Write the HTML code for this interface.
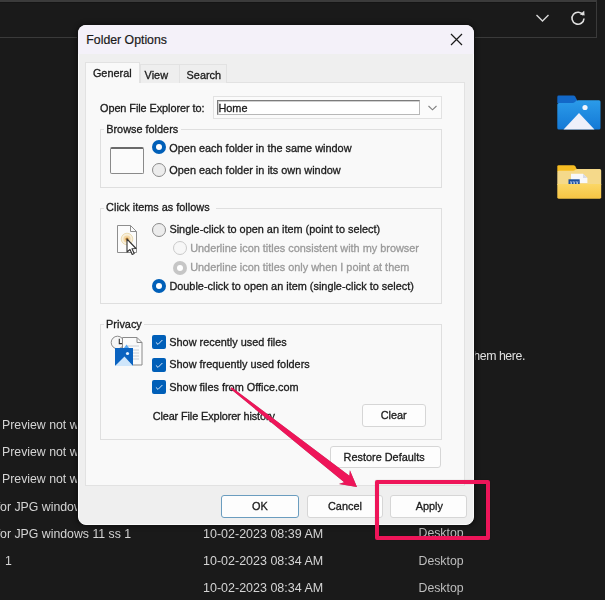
<!DOCTYPE html>
<html><head><meta charset="utf-8"><style>
html,body{margin:0;padding:0;}
body{width:605px;height:600px;overflow:hidden;position:relative;background:#1a1a1a;font-family:"Liberation Sans",sans-serif;}
.t{position:absolute;white-space:nowrap;line-height:1;}
.d{transform:scaleY(1.08);transform-origin:0 9.2px;-webkit-text-stroke:0.3px currentColor;}
#w{position:absolute;left:0;top:0;width:605px;height:600px;overflow:hidden;filter:blur(0.3px);}
</style></head><body>
<div id="w">
<div style="position:absolute;left:-2px;top:0px;width:599px;height:38px;box-sizing:border-box;border-top:2px solid #3b3b3b;border-right:1px solid #3a3a3a;border-bottom:1px solid #3a3a3a;background:#1a1a1a;"></div>
<div style="position:absolute;left:0px;top:2px;width:596px;height:1px;box-sizing:border-box;background:#151515;"></div>
<svg style="position:absolute;left:535px;top:13px" width="15" height="10" viewBox="0 0 15 10"><path d="M1.5 2 L7.5 8 L13.5 2" fill="none" stroke="#d8d8d8" stroke-width="1.4"/></svg>
<svg style="position:absolute;left:569px;top:9px" width="18" height="18" viewBox="0 0 18 18"><path d="M14.2 6.2 A6 6 0 1 0 15 9.5" fill="none" stroke="#e0e0e0" stroke-width="1.6"/><path d="M10.8 5.6 L15.6 6.4 L15.2 1.8 Z" fill="#e0e0e0"/></svg>
<div class="t" style="left:2.00px;top:419.39px;font-size:12.3px;color:#d4d4d4;">Preview not working</div>
<div class="t" style="left:2.00px;top:446.39px;font-size:12.3px;color:#d4d4d4;">Preview not working</div>
<div class="t" style="left:2.00px;top:473.39px;font-size:12.3px;color:#d4d4d4;">Preview not working</div>
<div class="t" style="left:-3.30px;top:500.59px;font-size:12.3px;color:#d4d4d4;">for JPG windows 11 ss 1</div>
<div class="t" style="left:-3.30px;top:527.59px;font-size:12.3px;color:#d4d4d4;">for JPG windows 11 ss 1</div>
<div class="t" style="left:5.00px;top:554.79px;font-size:12.3px;color:#d4d4d4;">1</div>
<div class="t" style="left:203.00px;top:528.02px;font-size:12.5px;color:#d4d4d4;">10-02-2023 08:39 AM</div>
<div class="t" style="left:203.00px;top:554.72px;font-size:12.5px;color:#d4d4d4;">10-02-2023 08:34 AM</div>
<div class="t" style="left:203.00px;top:581.82px;font-size:12.5px;color:#d4d4d4;">10-02-2023 08:34 AM</div>
<div class="t" style="left:418.50px;top:527.19px;font-size:12.3px;color:#bdbdbd;">Desktop</div>
<div class="t" style="left:418.50px;top:554.59px;font-size:12.3px;color:#bdbdbd;">Desktop</div>
<div class="t" style="left:418.50px;top:581.59px;font-size:12.3px;color:#bdbdbd;">Desktop</div>
<div class="t" style="left:470.30px;top:350.19px;font-size:12.3px;color:#e0e0e0;letter-spacing:-0.42px;">them here.</div>
<svg style="position:absolute;left:550px;top:90px" width="55" height="45" viewBox="0 0 55 45">
<defs><linearGradient id="gb" x1="0" y1="0" x2="0" y2="1"><stop offset="0" stop-color="#2b9be9"/><stop offset="1" stop-color="#1479d6"/></linearGradient></defs>
<path d="M7.3 7 Q7.3 5.6 8.7 5.6 L23.5 5.6 Q24.6 5.6 25.2 6.6 L27 10 L27 13 L7.3 13 Z" fill="#1268c8"/>
<path d="M7.3 14.5 Q7.3 12.9 8.9 12.9 L23 12.9 Q24.4 12.9 25.3 11.8 L26.2 10.8 Q27 10.3 28 10.3 L49 10.3 Q50.5 10.3 50.5 11.8 L50.5 38 Q50.5 39.5 49 39.5 L8.8 39.5 Q7.3 39.5 7.3 38 Z" fill="url(#gb)"/>
<circle cx="35" cy="17.5" r="2.6" fill="#f2f5fc"/>
<path d="M13.5 39.5 L29 23 L44.5 39.5 Z" fill="#eef0fa"/>
</svg>
<svg style="position:absolute;left:550px;top:160px" width="55" height="45" viewBox="0 0 55 45">
<defs><linearGradient id="gy" x1="0" y1="0" x2="0" y2="1"><stop offset="0" stop-color="#fbd766"/><stop offset="1" stop-color="#f7c443"/></linearGradient></defs>
<path d="M7.3 6.5 Q7.3 5.2 8.6 5.2 L23.5 5.2 Q24.6 5.2 25.2 6.2 L27 9.5 L27 12 L7.3 12 Z" fill="#f7bd22"/>
<path d="M7.3 12.5 Q7.3 10.8 9 10.8 L23 10.8 Q24.4 10.8 25.3 9.8 L26 9.2 Q26.6 9 27.5 9 L49.7 9 Q51.2 9 51.2 10.5 L51.2 25 L7.3 25 Z" fill="#f5d98a"/>
<path d="M21 13.8 L33 13.8 L37.4 18 L37.4 23 L21 23 Z" fill="#f8f8fb"/>
<path d="M33 13.8 L33 18 L37.4 18" fill="#d9dbe6"/>
<rect x="18.5" y="19.3" width="11.2" height="5.7" fill="#1b4f9f"/>
<path d="M20.5 21.3 L21.2 24 L22 21.3 M23.5 21.3 L24.2 24 L25 21.3 M26.5 21.3 L27.2 24 L28 21.3" stroke="#d8e2f3" stroke-width="0.7" fill="none"/>
<path d="M7.3 24 L51.2 24 L51.2 37.3 Q51.2 38.7 49.8 38.7 L8.7 38.7 Q7.3 38.7 7.3 37.3 Z" fill="url(#gy)"/>
</svg>
<div style="position:absolute;left:78px;top:25px;width:396px;height:500px;box-sizing:border-box;background:#efefef;border:1px solid #fafafa;border-radius:8px;box-shadow:0 0 0 1px #131313, 0 0 4px 2px rgba(0,0,0,.35);"></div>
<div style="position:absolute;left:78px;top:25px;width:396px;height:28.5px;box-sizing:border-box;background:#f4f1f9;border-radius:8px 8px 0 0;"></div>
<div class="t" style="left:86.30px;top:33.59px;font-size:12.3px;color:#1a1a1a;-webkit-text-stroke:0.2px #1a1a1a;">Folder Options</div>
<svg style="position:absolute;left:450px;top:33px" width="13" height="13" viewBox="0 0 13 13"><path d="M1 1 L12 12 M12 1 L1 12" stroke="#1a1a1a" stroke-width="1.2"/></svg>
<div style="position:absolute;left:85px;top:82px;width:380px;height:404px;box-sizing:border-box;background:#f9f9f9;border:1px solid #e2e2e2;"></div>
<div style="position:absolute;left:140px;top:64px;width:40px;height:19px;box-sizing:border-box;background:#eeeeee;border:1px solid #e2e2e2;border-bottom:none;"></div>
<div style="position:absolute;left:179px;top:64px;width:48px;height:19px;box-sizing:border-box;background:#eeeeee;border:1px solid #e2e2e2;border-bottom:none;"></div>
<div style="position:absolute;left:85px;top:62px;width:55px;height:21px;box-sizing:border-box;background:#f9f9f9;border:1px solid #e2e2e2;border-bottom:none;"></div>
<div class="t d" style="left:92.90px;top:67.77px;font-size:10.9px;color:#1b1b1b;">General</div>
<div class="t d" style="left:144.60px;top:70.17px;font-size:10.9px;color:#1b1b1b;">View</div>
<div class="t d" style="left:186.60px;top:70.17px;font-size:10.9px;color:#1b1b1b;">Search</div>
<div class="t d" style="left:100.00px;top:103.37px;font-size:10.9px;color:#1b1b1b;letter-spacing:-0.07px;">Open File Explorer to:</div>
<div style="position:absolute;left:213px;top:96px;width:229px;height:23px;box-sizing:border-box;background:#fbfbfb;border:1px solid #e2e2e2;"></div>
<div style="position:absolute;left:217px;top:100px;width:203px;height:15px;box-sizing:border-box;background:#ffffff;border:1px solid #b8b8b8;border-top-color:#7c7c7c;border-left-color:#7c7c7c;box-shadow:inset 1px 1px 0 #d0d0d0;"></div>
<div class="t d" style="left:218.40px;top:102.57px;font-size:10.9px;color:#1b1b1b;">Home</div>
<svg style="position:absolute;left:427px;top:104px" width="11" height="8" viewBox="0 0 11 8"><path d="M1.5 2 L5.5 5.8 L9.5 2" fill="none" stroke="#808080" stroke-width="1.1"/></svg>
<div style="position:absolute;left:100px;top:129px;width:342px;height:59px;box-sizing:border-box;border:1px solid #dfdfdf;"></div>
<div style="position:absolute;left:104.2px;top:127px;width:77px;height:5px;box-sizing:border-box;background:#f9f9f9;"></div>
<div class="t d" style="left:106.20px;top:124.17px;font-size:10.9px;color:#1b1b1b;">Browse folders</div>
<div style="position:absolute;left:100px;top:208px;width:342px;height:96px;box-sizing:border-box;border:1px solid #dfdfdf;"></div>
<div style="position:absolute;left:104.1px;top:206px;width:112px;height:5px;box-sizing:border-box;background:#f9f9f9;"></div>
<div class="t d" style="left:106.10px;top:202.47px;font-size:10.9px;color:#1b1b1b;">Click items as follows</div>
<div style="position:absolute;left:100px;top:324px;width:342px;height:116px;box-sizing:border-box;border:1px solid #dfdfdf;"></div>
<div style="position:absolute;left:104.1px;top:322px;width:40px;height:5px;box-sizing:border-box;background:#f9f9f9;"></div>
<div class="t d" style="left:106.10px;top:318.77px;font-size:10.9px;color:#1b1b1b;">Privacy</div>
<div style="position:absolute;left:110px;top:147px;width:34px;height:27px;box-sizing:border-box;background:#fbfbfb;border:1px solid #8a8a8a;border-top:2px solid #6a6a6a;border-radius:2px;"></div>
<svg style="position:absolute;left:151px;top:139.2px" width="16" height="16" viewBox="0 0 16 16"><circle cx="8" cy="8" r="7" fill="#005fb8"/><circle cx="8" cy="8" r="3" fill="#ffffff"/></svg>
<svg style="position:absolute;left:151px;top:162px" width="16" height="16" viewBox="0 0 16 16"><circle cx="8" cy="8" r="6.5" fill="#ececec" stroke="#8a8a8a" stroke-width="1"/></svg>
<div class="t d" style="left:169.30px;top:142.77px;font-size:10.9px;color:#1b1b1b;">Open each folder in the same window</div>
<div class="t d" style="left:169.30px;top:165.37px;font-size:10.9px;color:#1b1b1b;">Open each folder in its own window</div>
<svg style="position:absolute;left:114px;top:222px" width="26" height="36" viewBox="0 0 26 36">
<defs><radialGradient id="glow"><stop offset="0" stop-color="#c98a2a"/><stop offset="0.45" stop-color="#f2cf8f"/><stop offset="0.8" stop-color="#f6e6c6"/><stop offset="1" stop-color="#fbfbfb" stop-opacity="0"/></radialGradient></defs>
<path d="M3.5 3.5 L16.5 3.5 L22.5 9.5 L22.5 30.5 L3.5 30.5 Z" fill="#fbfbfb" stroke="#8e8e8e" stroke-width="1"/>
<path d="M16.5 3.5 L16.5 9.5 L22.5 9.5" fill="none" stroke="#8e8e8e" stroke-width="1"/>
<circle cx="13" cy="17" r="5.8" fill="#f7efdc" stroke="#ecdcb2" stroke-width="1"/><circle cx="13" cy="17" r="3.6" fill="#f3d6a2"/><circle cx="13" cy="17" r="1.6" fill="#c98a3a"/>
<path d="M13 17 L13 30 L16 27.5 L18.2 32.5 L20.2 31.6 L18 26.8 L22 26.5 Z" fill="#ffffff" stroke="#333" stroke-width="1.1" stroke-linejoin="round"/>
</svg>
<svg style="position:absolute;left:151px;top:221.5px" width="16" height="16" viewBox="0 0 16 16"><circle cx="8" cy="8" r="6.5" fill="#ececec" stroke="#8a8a8a" stroke-width="1"/></svg>
<svg style="position:absolute;left:172px;top:240px" width="16" height="16" viewBox="0 0 16 16"><circle cx="8" cy="8" r="6.5" fill="#f7f7f7" stroke="#c9c9c9" stroke-width="1"/></svg>
<svg style="position:absolute;left:172px;top:259.5px" width="16" height="16" viewBox="0 0 16 16"><circle cx="8" cy="8" r="7" fill="#c6c6c6"/><circle cx="8" cy="8" r="3" fill="#ffffff"/></svg>
<svg style="position:absolute;left:151px;top:278.3px" width="16" height="16" viewBox="0 0 16 16"><circle cx="8" cy="8" r="7" fill="#005fb8"/><circle cx="8" cy="8" r="3" fill="#ffffff"/></svg>
<div class="t d" style="left:169.40px;top:224.37px;font-size:10.9px;color:#1b1b1b;">Single-click to open an item (point to select)</div>
<div class="t d" style="left:190.20px;top:242.97px;font-size:10.9px;color:#9a9a9a;">Underline icon titles consistent with my browser</div>
<div class="t d" style="left:190.20px;top:262.27px;font-size:10.9px;color:#9a9a9a;">Underline icon titles only when I point at them</div>
<div class="t d" style="left:169.40px;top:281.37px;font-size:10.9px;color:#1b1b1b;">Double-click to open an item (single-click to select)</div>
<svg style="position:absolute;left:108px;top:332px" width="38" height="38" viewBox="0 0 38 38">
<circle cx="9.5" cy="10.5" r="6.3" fill="#f6f6f6" stroke="#8a8a8a" stroke-width="1"/>
<path d="M11.3 6.8 L11.3 11.6 L14.5 11.6" fill="none" stroke="#333" stroke-width="1.1"/>
<path d="M14.5 5.5 L29 5.5 L34 10.5 L34 33 L14.5 33 Z" fill="#fafafa" stroke="#8a8a8a" stroke-width="1"/>
<path d="M29 5.5 L29 10.5 L34 10.5" fill="none" stroke="#8a8a8a" stroke-width="1"/>
<path d="M19 14 L31 14 M22 18 L31 18 M22 21 L31 21 M22 24 L31 24 M22 27 L31 27" stroke="#bcc3cc" stroke-width="0.8"/>
<path d="M7 16 L25 16 L25 34 L17 27 L7 34 Z" fill="#0b63c0"/>
<path d="M7 34 L16.5 24.5 L25 34 Z" fill="#cfe6fb"/>
<circle cx="19.5" cy="21.5" r="1.6" fill="#e8f3ff"/>
<path d="M16 16 L18.5 12.5 L21 16 Z" fill="#5aa8f0"/>
</svg>
<svg style="position:absolute;left:152px;top:334.8px" width="14" height="14" viewBox="0 0 14 14"><rect x="0" y="0" width="14" height="14" rx="2" fill="#005fb8"/><path d="M3.9 7.4 L6 9.4 L10.4 5" fill="none" stroke="#dce9f8" stroke-width="1"/></svg>
<svg style="position:absolute;left:152px;top:357.5px" width="14" height="14" viewBox="0 0 14 14"><rect x="0" y="0" width="14" height="14" rx="2" fill="#005fb8"/><path d="M3.9 7.4 L6 9.4 L10.4 5" fill="none" stroke="#dce9f8" stroke-width="1"/></svg>
<svg style="position:absolute;left:152px;top:379.8px" width="14" height="14" viewBox="0 0 14 14"><rect x="0" y="0" width="14" height="14" rx="2" fill="#005fb8"/><path d="M3.9 7.4 L6 9.4 L10.4 5" fill="none" stroke="#dce9f8" stroke-width="1"/></svg>
<div class="t d" style="left:169.30px;top:336.97px;font-size:10.9px;color:#1b1b1b;">Show recently used files</div>
<div class="t d" style="left:169.30px;top:359.47px;font-size:10.9px;color:#1b1b1b;">Show frequently used folders</div>
<div class="t d" style="left:169.30px;top:381.87px;font-size:10.9px;color:#1b1b1b;">Show files from Office.com</div>
<div class="t d" style="left:152.70px;top:410.87px;font-size:10.9px;color:#1b1b1b;letter-spacing:-0.12px;">Clear File Explorer history</div>
<div style="position:absolute;left:362px;top:404px;width:64px;height:23px;box-sizing:border-box;background:#fdfdfd;border:1px solid #d6d6d6;border-radius:3px;"></div>
<div class="t d" style="left:380.70px;top:410.07px;font-size:10.9px;color:#1b1b1b;">Clear</div>
<div style="position:absolute;left:330px;top:446px;width:111px;height:22px;box-sizing:border-box;background:#fdfdfd;border:1px solid #d6d6d6;border-radius:3px;"></div>
<div class="t d" style="left:343.60px;top:452.17px;font-size:10.9px;color:#1b1b1b;">Restore Defaults</div>
<div style="position:absolute;left:221px;top:495px;width:78px;height:23px;box-sizing:border-box;background:#fdfdfd;border:1px solid #6b9dbf;border-radius:3px;"></div>
<div class="t d" style="left:252.00px;top:500.97px;font-size:10.9px;color:#1b1b1b;">OK</div>
<div style="position:absolute;left:307px;top:495px;width:76px;height:23px;box-sizing:border-box;background:#fdfdfd;border:1px solid #d6d6d6;border-radius:3px;"></div>
<div class="t d" style="left:328.00px;top:500.87px;font-size:10.9px;color:#1b1b1b;">Cancel</div>
<div style="position:absolute;left:390px;top:495px;width:77px;height:23px;box-sizing:border-box;background:#fdfdfd;border:1px solid #d6d6d6;border-radius:3px;"></div>
<div class="t d" style="left:415.70px;top:500.97px;font-size:10.9px;color:#1b1b1b;">Apply</div>
<div style="position:absolute;left:375px;top:480px;width:114.7px;height:59.5px;box-sizing:border-box;border:4.5px solid #ee1559;border-radius:2px;box-shadow:0 0 1px rgba(40,0,10,.4), inset 0 0 1px rgba(40,0,10,.4);"></div>
<svg style="position:absolute;left:0;top:0;filter:drop-shadow(0.4px 0.6px 0.7px rgba(70,0,20,.55))" width="605" height="600" viewBox="0 0 605 600">
<path d="M231.6 387.2 L349.4 475.7 L349.9 470.2 L357.0 487.0 L339.0 484.0 L344.2 482.3 L230.4 388.8 Z" fill="#ee1559"/>
</svg>
</div></body></html>
